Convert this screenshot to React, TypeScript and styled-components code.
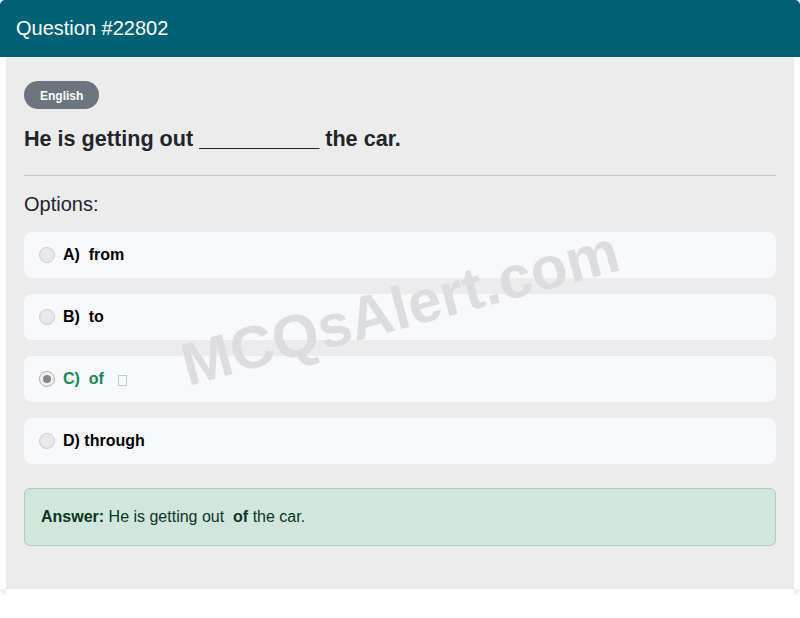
import React from "react";
import styled, { createGlobalStyle } from "styled-components";

const GlobalStyle = createGlobalStyle`
  * { box-sizing: border-box; }
  html, body { margin: 0; padding: 0; background: #ffffff; }
  body { font-family: "Liberation Sans", Arial, sans-serif; color: #212529; }
`;

const Card = styled.div`
  width: 800px;
  display: flex;
  flex-direction: column;
`;

const Header = styled.div`
  height: 57px;
  display: flex;
  align-items: center;
  padding: 0 16px;
  background: #016174;
  color: #ffffff;
  font-size: 20px;
  border-radius: 5px 5px 0 0;
`;

const Body = styled.div`
  position: relative;
  margin: 0 6px;
  padding: 24px 18px 24px;
  background: #ececec;
  display: flex;
  flex-direction: column;
  overflow: hidden;
`;

const Footer = styled.div`
  height: 6px;
  display: flex;
  justify-content: space-between;
`;

const Corner = styled.span<{ $side: "left" | "right" }>`
  width: 6px;
  height: 6px;
  background: #f1f1f1;
  border-radius: ${(p) => (p.$side === "left" ? "0 0 0 6px" : "0 0 6px 0")};
`;

const Badge = styled.span`
  align-self: flex-start;
  height: 28px;
  padding: 1px 16px 0;
  display: inline-flex;
  align-items: center;
  border-radius: 14px;
  background: #6c757d;
  color: #ffffff;
  font-size: 12px;
  font-weight: 700;
`;

const Question = styled.h2`
  margin: 17px 0 23px;
  font-size: 21.6px;
  line-height: 26px;
  font-weight: 700;
  color: #212529;
`;

const Rule = styled.hr`
  margin: 0;
  border: 0;
  border-top: 1px solid #c8c8c8;
`;

const OptionsLabel = styled.div`
  margin: 16px 0 16px;
  font-size: 20px;
  line-height: 24px;
`;

const OptionList = styled.div`
  display: flex;
  flex-direction: column;
  gap: 16px;
`;

const Option = styled.div<{ $correct?: boolean }>`
  height: 46px;
  padding: 0 15px;
  display: flex;
  align-items: center;
  background: #f8f9fc;
  border-radius: 8px;
  font-size: 16px;
  font-weight: 700;
  color: ${(p) => (p.$correct ? "#198754" : "#000000")};
  white-space: pre;
`;

const Radio = styled.span<{ $checked?: boolean }>`
  width: 16px;
  height: 16px;
  margin-right: 8px;
  border-radius: 50%;
  border: 1px solid ${(p) => (p.$checked ? "#b0b0b0" : "#cdcdcd")};
  background: ${(p) => (p.$checked ? "#f0f0f0" : "#e9e9ec")};
  display: inline-flex;
  align-items: center;
  justify-content: center;
  &::after {
    content: "";
    width: 8px;
    height: 8px;
    border-radius: 50%;
    background: ${(p) => (p.$checked ? "#858585" : "transparent")};
  }
`;

const Tofu = styled.span`
  width: 9px;
  height: 11px;
  margin-left: 14px;
  margin-top: 3px;
  border: 1px solid #a8d8bf;
`;

const Answer = styled.div`
  margin: 24px 0 19px;
  padding: 16px;
  border: 1px solid #a3cfbb;
  border-radius: 6px;
  background: #d1e7dd;
  color: #0a3622;
  font-size: 16px;
  line-height: 24px;
  white-space: pre;
`;

const Watermark = styled.div`
  position: absolute;
  left: 50%;
  top: 251px;
  transform: translate(-50%, -50%) rotate(-15deg);
  font-size: 60px;
  font-weight: 700;
  color: #dcdde0;
  white-space: nowrap;
  pointer-events: none;
  user-select: none;
`;

const options = [
  { key: "A)  ", text: "from" },
  { key: "B)  ", text: "to" },
  { key: "C)  ", text: "of", correct: true },
  { key: "D) ", text: "through" },
];

export default function App() {
  return (
    <>
      <GlobalStyle />
      <Card>
        <Header>Question #22802</Header>
        <Body>
          <Badge>English</Badge>
          <Question>He is getting out __________ the car.</Question>
          <Rule />
          <OptionsLabel>Options:</OptionsLabel>
          <OptionList>
            {options.map((o) => (
              <Option key={o.key} $correct={o.correct}>
                <Radio $checked={o.correct} />
                {o.key}
                {o.text}
                {o.correct && <Tofu />}
              </Option>
            ))}
          </OptionList>
          <Answer>
            <b>Answer:</b> He is getting out  <b>of</b> the car.
          </Answer>
          <Watermark>MCQsAlert.com</Watermark>
        </Body>
        <Footer>
          <Corner $side="left" />
          <Corner $side="right" />
        </Footer>
      </Card>
    </>
  );
}
